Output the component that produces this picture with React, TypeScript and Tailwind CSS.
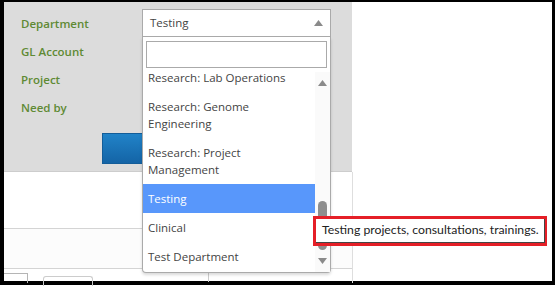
import React from "react";

const labels = ["Department", "GL Account", "Project", "Need by"];

const options: { lines: string[]; active?: boolean }[] = [
  { lines: ["Research: Lab Operations"] },
  { lines: ["Research: Genome", "Engineering"] },
  { lines: ["Research: Project", "Management"] },
  { lines: ["Testing"], active: true },
  { lines: ["Clinical"] },
  { lines: ["Test Department"] },
];

const Triangle = ({ up = true, className = "" }: { up?: boolean; className?: string }) => (
  <svg width="9" height="6" viewBox="0 0 9 6" className={className}>
    <path d={up ? "M0 6 L4.5 0 L9 6 Z" : "M0 0 L4.5 6 L9 0 Z"} fill="#8a8a8a" />
  </svg>
);

export default function App() {
  return (
    <div className="w-[560px] h-[287px] bg-white relative overflow-hidden font-['Open_Sans',sans-serif]">
      {/* framed screenshot */}
      <div className="w-[555px] h-[285px] border-l-4 border-t-2 border-r-[3px] border-b-4 border-black flex flex-col">
        {/* gray form panel */}
        <div className="w-[348px] h-[170px] bg-[#dcdcdc] border-b border-[#cdcdcd] pt-[8px] pl-[17px] flex flex-col shrink-0">
          {labels.map((l) => (
            <div key={l} className="h-[28px] flex items-center text-[11.5px] font-semibold text-[#5f8a34]">
              {l}
            </div>
          ))}
          <div className="mt-[11px] ml-[81px] w-[42px] h-[31px] bg-gradient-to-b from-[#2183c8] to-[#1464a6] border border-[#135d99]" />
        </div>

        {/* lower area */}
        <div className="w-[349px] flex-1 flex flex-col border-r border-[#dedede]">
          <div className="h-[56px] bg-white" />
          <div className="h-[40px] border-t border-[#d4d4d4] bg-[#fcfcfc]" />
          <div className="flex-1 border-t border-[#d4d4d4] relative">
            <div className="mt-[4px] w-[24px] h-[10px] border-t border-r border-[#b5b5b5]" />
            <div className="absolute left-[39px] top-[7px] w-[50px] h-[10px] border-t border-x border-[#cccccc] rounded-t-[3px]" />
            <div className="absolute left-[204px] top-[3px] h-[10px] border-l border-[#cccccc]" />
          </div>
        </div>
      </div>

      {/* open select dropdown */}
      <div className="absolute left-[142px] top-[9px] w-[189px] text-[11.5px] text-[#444]">
        <div className="h-[28px] border border-[#aaaaaa] bg-white flex items-center justify-between pl-[7px] pr-[7px]">
          <span>Testing</span>
          <Triangle className="mt-[-1px]" />
        </div>
        <div className="h-[236px] border-x border-b border-[#aaaaaa] rounded-b-[4px] bg-white flex flex-col shadow-[0_2px_3px_rgba(0,0,0,0.15)]">
          <div className="px-[3px] pt-[4px]">
            <div className="h-[27px] border border-[#aaaaaa] bg-white" />
          </div>
          <div className="flex-1 flex overflow-hidden">
            <div className="w-[172px] overflow-hidden">
              <div className="mt-[-5px]">
                {options.map((o) => (
                  <div
                    key={o.lines.join(" ")}
                    className={`py-[6px] pl-[5px] leading-[17px] ${o.active ? "bg-[#5897fb] text-white" : ""}`}
                  >
                    {o.lines.map((ln) => (
                      <div key={ln}>{ln}</div>
                    ))}
                  </div>
                ))}
              </div>
            </div>
            <div className="w-[15px] mt-[4px] bg-[#fafafa] flex flex-col items-center pt-[8px] pb-[8px]">
              <Triangle />
              <div className="flex-1" />
              <div className="w-[9px] h-[49px] rounded-full bg-[#8e8e8e]" />
              <div className="h-[8px]" />
              <Triangle up={false} />
            </div>
          </div>
        </div>
      </div>

      {/* highlighted tooltip */}
      <div className="absolute left-[313px] top-[216px] w-[234px] h-[30px] border-[3px] border-[#e51f27] bg-white">
        <div className="h-full w-[229px] border-b border-r border-[#444] pl-[6px] pb-[1px] flex items-center whitespace-nowrap text-[12.25px] text-[#222] font-['Lato',sans-serif]">
          Testing projects, consultations, trainings.
        </div>
      </div>
    </div>
  );
}
